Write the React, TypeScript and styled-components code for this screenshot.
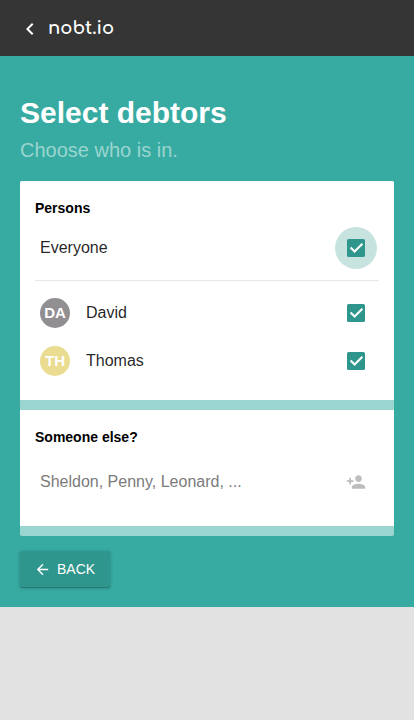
import React from "react";
import styled, { createGlobalStyle } from "styled-components";

const GlobalStyle = createGlobalStyle`
  * { box-sizing: border-box; }
  body {
    margin: 0;
    background: #e2e2e2;
    font-family: "Liberation Sans", Arial, sans-serif;
    color: rgba(0, 0, 0, 0.87);
  }
`;

const Header = styled.header`
  display: flex;
  align-items: center;
  height: 56px;
  padding-left: 18px;
  background: #353535;
  color: #fff;
`;

const BackLink = styled.span`
  display: flex;
  margin-top: 2px;
`;

const Brand = styled.span`
  margin: 0 0 0 6px;
  font-family: Comfortaa, Quicksand, Lato, sans-serif;
  font-size: 18px;
  font-weight: 700;
  line-height: 24px;
`;

const Main = styled.main`
  height: 551px;
  padding: 40px 20px 20px;
  background: #37aba2;
`;

const Title = styled.h1`
  margin: 0;
  font-size: 30px;
  line-height: 34px;
  font-weight: 700;
  color: #fff;
`;

const Subtitle = styled.h2`
  margin: 8px 0 19px;
  font-size: 20px;
  line-height: 24px;
  font-weight: 400;
  color: #9ad5cf;
`;

const Sections = styled.div`
  border-radius: 2px;
  overflow: hidden;
  background: #9ad5cf;
`;

const Section = styled.section<{ $height: number }>`
  height: ${(p) => p.$height}px;
  margin-bottom: 10px;
  padding: 19px 15px 0;
  background: #fff;
`;

const SectionTitle = styled.h3`
  margin: 0;
  font-size: 14px;
  line-height: 16px;
  font-weight: 700;
  color: #000;
`;

const Row = styled.div<{ $height: number }>`
  display: flex;
  align-items: center;
  height: ${(p) => p.$height}px;
  padding: 0 2px 0 5px;
  font-size: 16px;
`;

const Name = styled.span`
  flex: 1;
`;

const Divider = styled.hr`
  height: 1px;
  margin: 0 0 8px;
  border: 0;
  background: #e8e8e8;
`;

const Avatar = styled.span<{ $color: string }>`
  display: flex;
  align-items: center;
  justify-content: center;
  width: 30px;
  height: 30px;
  margin-right: 16px;
  padding-bottom: 2px;
  border-radius: 50%;
  background: ${(p) => p.$color};
  color: #fff;
  font-size: 15px;
  font-weight: 700;
`;

const CheckButton = styled.span<{ $focused?: boolean }>`
  display: flex;
  align-items: center;
  justify-content: center;
  width: 42px;
  height: 42px;
  border-radius: 50%;
  background: ${(p) => (p.$focused ? "#c7e3e0" : "transparent")};
  color: #2e968d;
`;

const PersonInput = styled.input`
  flex: 1;
  min-width: 0;
  padding: 0;
  border: 0;
  outline: 0;
  background: transparent;
  font: inherit;
  &::placeholder {
    color: #7b7b7b;
    opacity: 1;
  }
`;

const AddButton = styled.span`
  display: flex;
  justify-content: center;
  width: 42px;
  color: #bdbdbd;
`;

const BackButton = styled.button`
  display: flex;
  align-items: center;
  width: 90px;
  height: 36px;
  margin-top: 15px;
  padding: 0 0 0 14px;
  border: 0;
  border-radius: 2px;
  background: #2e968d;
  color: #fff;
  font-family: inherit;
  font-size: 14px;
  box-shadow: 0 1px 4px rgba(0, 0, 0, 0.2), 0 1px 1px rgba(0, 0, 0, 0.22);
`;

const BackLabel = styled.span`
  margin-left: 6px;
`;

const InputRow = styled(Row)`
  margin-top: 13px;
`;

function Icon({ d, size = 24 }: { d: string; size?: number }) {
  return (
    <svg width={size} height={size} viewBox="0 0 24 24" fill="currentColor" aria-hidden="true">
      <path d={d} />
    </svg>
  );
}

const CHEVRON = "M15.41 7.41 14 6l-6 6 6 6 1.41-1.41L10.83 12z";
const ADD_PERSON =
  "M15 12c2.21 0 4-1.79 4-4s-1.79-4-4-4-4 1.79-4 4 1.79 4 4 4zm-9-2V7H4v3H1v2h3v3h2v-3h3v-2H6zm9 4c-2.67 0-8 1.34-8 4v2h16v-2c0-2.66-5.33-4-8-4z";
const ARROW = "M20 11H7.83l5.59-5.59L12 4l-8 8 8 8 1.41-1.41L7.83 13H20v-2z";

const people = [
  { name: "David", initials: "DA", color: "#918f92" },
  { name: "Thomas", initials: "TH", color: "#eadc90" },
];

function Check({ focused }: { focused?: boolean }) {
  return (
    <CheckButton $focused={focused} role="checkbox" aria-checked="true">
      <svg width="24" height="24" viewBox="0 0 24 24" aria-hidden="true">
        <rect x="3" y="3" width="18" height="18" rx="1.6" fill="currentColor" />
        <path d="M6.6 11.6 10.6 15.6 18.4 7.8" fill="none" stroke="#fff" strokeWidth="2.1" />
      </svg>
    </CheckButton>
  );
}

export default function App() {
  return (
    <>
      <GlobalStyle />
      <Header>
        <BackLink>
          <Icon d={CHEVRON} />
        </BackLink>
        <Brand>nobt.io</Brand>
      </Header>
      <Main>
        <Title>Select debtors</Title>
        <Subtitle>Choose who is in.</Subtitle>
        <Sections>
          <Section $height={219}>
            <SectionTitle>Persons</SectionTitle>
            <Row $height={64}>
              <Name>Everyone</Name>
              <Check focused />
            </Row>
            <Divider />
            {people.map((p) => (
              <Row key={p.name} $height={48}>
                <Avatar $color={p.color}>{p.initials}</Avatar>
                <Name>{p.name}</Name>
                <Check />
              </Row>
            ))}
          </Section>
          <Section $height={116}>
            <SectionTitle>Someone else?</SectionTitle>
            <InputRow $height={48}>
              <PersonInput placeholder="Sheldon, Penny, Leonard, ..." />
              <AddButton>
                <Icon d={ADD_PERSON} size={20} />
              </AddButton>
            </InputRow>
          </Section>
        </Sections>
        <BackButton>
          <Icon d={ARROW} size={17} />
          <BackLabel>BACK</BackLabel>
        </BackButton>
      </Main>
    </>
  );
}
